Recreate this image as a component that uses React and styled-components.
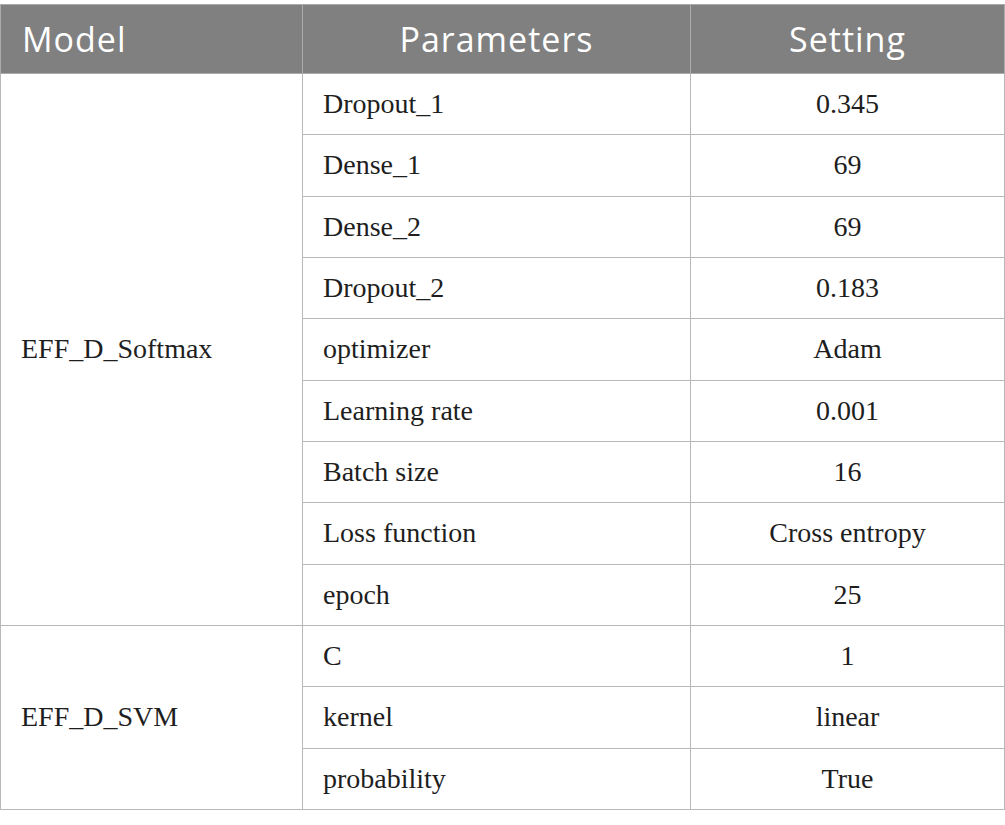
import React from "react";
import styled, { createGlobalStyle } from "styled-components";

const GlobalStyle = createGlobalStyle`
  html, body {
    margin: 0;
    padding: 0;
    background: #ffffff;
  }
`;

const ROWS = [
  { model: "EFF_D_Softmax", span: 9, param: "Dropout_1", value: "0.345" },
  { param: "Dense_1", value: "69" },
  { param: "Dense_2", value: "69" },
  { param: "Dropout_2", value: "0.183" },
  { param: "optimizer", value: "Adam" },
  { param: "Learning rate", value: "0.001" },
  { param: "Batch size", value: "16" },
  { param: "Loss function", value: "Cross entropy" },
  { param: "epoch", value: "25" },
  { model: "EFF_D_SVM", span: 3, param: "C", value: "1" },
  { param: "kernel", value: "linear" },
  { param: "probability", value: "True" },
];

const Page = styled.div`
  padding-top: 4px;
`;

const Table = styled.table`
  width: 1004px;
  border-collapse: collapse;
  table-layout: fixed;
`;

const HeadCell = styled.th`
  height: 69px;
  padding: 0 21px;
  background: #7f807f;
  color: #ffffff;
  border: 1px solid #ababab;
  font-family: "Open Sans", "Noto Sans", sans-serif;
  font-size: 34px;
  font-weight: 400;
  letter-spacing: 1px;
  text-align: ${(p) => p.$align || "center"};
  vertical-align: middle;
  box-sizing: border-box;
`;

const BodyRow = styled.tr`
  height: 61.33px;
`;

const Cell = styled.td`
  padding: 0 20px;
  border: 1px solid #b8b8b8;
  color: #1e1e1e;
  font-family: "Liberation Serif", "Times New Roman", serif;
  font-size: 28px;
  text-align: ${(p) => p.$align || "left"};
  vertical-align: middle;
  white-space: nowrap;
`;

export default function App() {
  return (
    <Page>
      <GlobalStyle />
      <Table>
        <colgroup>
          <col style={{ width: 302 }} />
          <col style={{ width: 388 }} />
          <col style={{ width: 314 }} />
        </colgroup>
        <thead>
          <tr>
            <HeadCell $align="left">Model</HeadCell>
            <HeadCell>Parameters</HeadCell>
            <HeadCell>Setting</HeadCell>
          </tr>
        </thead>
        <tbody>
          {ROWS.map((row) => (
            <BodyRow key={row.param}>
              {row.model && <Cell rowSpan={row.span}>{row.model}</Cell>}
              <Cell>{row.param}</Cell>
              <Cell $align="center">{row.value}</Cell>
            </BodyRow>
          ))}
        </tbody>
      </Table>
    </Page>
  );
}
